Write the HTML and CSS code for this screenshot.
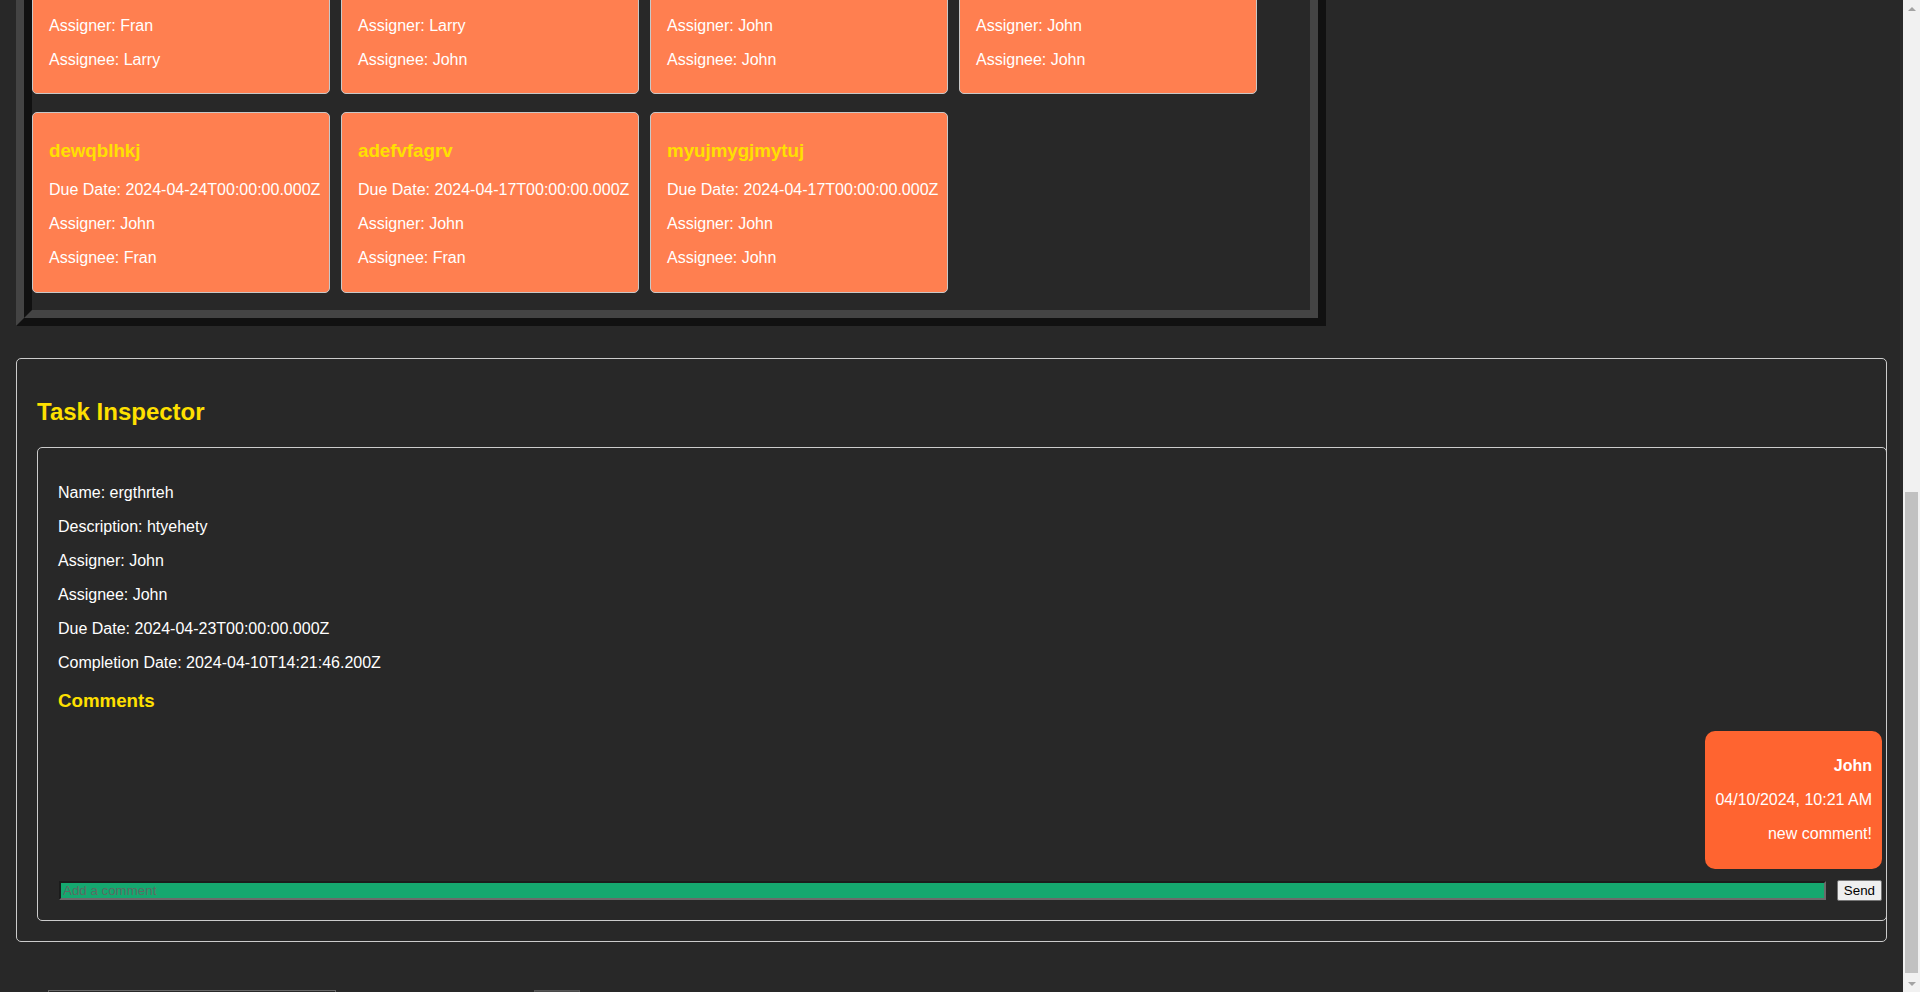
FILE: index.html
```html
<!DOCTYPE html>
<html lang="en">
<head>
<meta charset="utf-8">
<title>Task Board</title>
<link rel="stylesheet" href="styles.css">
</head>
<body>
<main class="app">
  <h1 class="page-title">Task Board</h1>

  <section class="board">
    <div class="board-inner">
      <div class="card"><h3 class="card-title">qwdqwdqw</h3><p>Due Date: 2024-04-12T00:00:00.000Z</p><p>Assigner: John</p><p>Assignee: Fran</p></div>
      <div class="card"><h3 class="card-title">fghjfgh</h3><p>Due Date: 2024-04-13T00:00:00.000Z</p><p>Assigner: Larry</p><p>Assignee: John</p></div>
      <div class="card"><h3 class="card-title">sdfsdfsdf</h3><p>Due Date: 2024-04-14T00:00:00.000Z</p><p>Assigner: Fran</p><p>Assignee: John</p></div>
      <div class="card"><h3 class="card-title">wertwert</h3><p>Due Date: 2024-04-15T00:00:00.000Z</p><p>Assigner: John</p><p>Assignee: Larry</p></div>

      <div class="card"><h3 class="card-title">tyuityui</h3><p>Due Date: 2024-04-16T00:00:00.000Z</p><p>Assigner: John</p><p>Assignee: John</p></div>
      <div class="card"><h3 class="card-title">zxcvzxcv</h3><p>Due Date: 2024-04-18T00:00:00.000Z</p><p>Assigner: Fran</p><p>Assignee: Fran</p></div>
      <div class="card"><h3 class="card-title">hjklhjkl</h3><p>Due Date: 2024-04-19T00:00:00.000Z</p><p>Assigner: Larry</p><p>Assignee: Fran</p></div>
      <div class="card"><h3 class="card-title">bnmbnm</h3><p>Due Date: 2024-04-20T00:00:00.000Z</p><p>Assigner: John</p><p>Assignee: Larry</p></div>

      <div class="card"><h3 class="card-title">poiupoiu</h3><p>Due Date: 2024-04-21T00:00:00.000Z</p><p>Assigner: Fran</p><p>Assignee: John</p></div>
      <div class="card"><h3 class="card-title">lkjhlkjh</h3><p>Due Date: 2024-04-22T00:00:00.000Z</p><p>Assigner: John</p><p>Assignee: Fran</p></div>
      <div class="card"><h3 class="card-title">mnbvmnbv</h3><p>Due Date: 2024-04-25T00:00:00.000Z</p><p>Assigner: Larry</p><p>Assignee: Larry</p></div>
      <div class="card"><h3 class="card-title">rewqrewq</h3><p>Due Date: 2024-04-26T00:00:00.000Z</p><p>Assigner: John</p><p>Assignee: John</p></div>

      <div class="card"><h3 class="card-title">gfdsgfds</h3><p>Due Date: 2024-04-27T00:00:00.000Z</p><p>Assigner: Fran</p><p>Assignee: Larry</p></div>
      <div class="card"><h3 class="card-title">vcxzvcxz</h3><p>Due Date: 2024-04-28T00:00:00.000Z</p><p>Assigner: Larry</p><p>Assignee: Fran</p></div>
      <div class="card"><h3 class="card-title">uytruytr</h3><p>Due Date: 2024-04-29T00:00:00.000Z</p><p>Assigner: John</p><p>Assignee: Fran</p></div>
      <div class="card"><h3 class="card-title">jhgfjhgf</h3><p>Due Date: 2024-04-30T00:00:00.000Z</p><p>Assigner: Fran</p><p>Assignee: John</p></div>

      <div class="card"><h3 class="card-title">thrthrth</h3><p>Due Date: 2024-04-19T00:00:00.000Z</p><p>Assigner: Fran</p><p>Assignee: Larry</p></div>
      <div class="card"><h3 class="card-title">yjtyjtyj</h3><p>Due Date: 2024-04-20T00:00:00.000Z</p><p>Assigner: Larry</p><p>Assignee: John</p></div>
      <div class="card"><h3 class="card-title">ergthrteh</h3><p>Due Date: 2024-04-23T00:00:00.000Z</p><p>Assigner: John</p><p>Assignee: John</p></div>
      <div class="card"><h3 class="card-title">kuykuyk</h3><p>Due Date: 2024-04-25T00:00:00.000Z</p><p>Assigner: John</p><p>Assignee: John</p></div>

      <div class="card"><h3 class="card-title">dewqblhkj</h3><p>Due Date: 2024-04-24T00:00:00.000Z</p><p>Assigner: John</p><p>Assignee: Fran</p></div>
      <div class="card"><h3 class="card-title">adefvfagrv</h3><p>Due Date: 2024-04-17T00:00:00.000Z</p><p>Assigner: John</p><p>Assignee: Fran</p></div>
      <div class="card"><h3 class="card-title">myujmygjmytuj</h3><p>Due Date: 2024-04-17T00:00:00.000Z</p><p>Assigner: John</p><p>Assignee: John</p></div>
    </div>
  </section>

  <section class="inspector">
    <h2 class="inspector-title">Task Inspector</h2>
    <div class="inspector-body">
      <p>Name: ergthrteh</p>
      <p>Description: htyehety</p>
      <p>Assigner: John</p>
      <p>Assignee: John</p>
      <p>Due Date: 2024-04-23T00:00:00.000Z</p>
      <p>Completion Date: 2024-04-10T14:21:46.200Z</p>
      <h3 class="comments-title">Comments</h3>
      <div class="comments">
        <div class="comment">
          <p><strong>John</strong></p>
          <p>04/10/2024, 10:21 AM</p>
          <p>new comment!</p>
        </div>
      </div>
      <form class="comment-form">
        <input class="comment-input" type="text" placeholder="Add a comment">
        <button class="send-btn" type="button">Send</button>
      </form>
    </div>
  </section>

  <form class="new-task">
    <input class="new-task-input" type="text" placeholder="Task name">
    <button class="new-task-btn" type="button">Add</button>
  </form>
</main>

<div class="scrollbar" aria-hidden="true">
  <div class="sb-btn"><span class="sb-arrow-up"></span></div>
  <div class="sb-track"><div class="sb-thumb"></div></div>
  <div class="sb-btn"><span class="sb-arrow-down"></span></div>
</div>

<script src="script.js"></script>
</body>
</html>
```

FILE: styles.css
```css
html {
  background: #282828;
}

body {
  margin: 8px 25px 8px 8px;
  background: #282828;
  color: #ffffff;
  font-family: "Liberation Sans", Arial, sans-serif;
  font-size: 16px;
}

.app {
  padding: 8px;
}

.page-title {
  margin: 21px 0;
  font-size: 32px;
  color: #ffe000;
}

/* board with a ridge-like double border */
.board {
  width: 1294px;
  border: 8px solid;
  border-color: #444444 #111111 #111111 #444444;
}

.board-inner {
  display: flex;
  flex-wrap: wrap;
  column-gap: 11px;
  row-gap: 18px;
  padding-bottom: 17px;
  border: 8px solid;
  border-color: #111111 #444444 #444444 #111111;
}

.card {
  width: 272px;
  padding: 8.6px 8px 8.6px 16px;
  background: #ff7f50;
  border: 1px solid #c8c8c8;
  border-radius: 5px;
  color: #ffffff;
}

.card-title {
  margin: 18.72px 0;
  font-size: 18.72px;
  color: #ffe000;
}

.card p {
  margin: 16px 0;
}

/* inspector */
.inspector {
  margin-top: 32px;
  padding: 18px 20px 20px;
  border: 1px solid #cccccc;
  border-radius: 5px;
  overflow: hidden;
}

.inspector-title {
  margin: 21px 0;
  font-size: 24px;
  color: #ffe000;
}

.inspector-body {
  margin-right: -21px;
  padding: 20px 4px 19px 20px;
  border: 1px solid #cccccc;
  border-radius: 5px;
}

.inspector-body p {
  margin: 16px 0;
}

.comments-title {
  margin: 18.72px 0;
  font-size: 18.72px;
  color: #ffe000;
}

.comment {
  width: fit-content;
  margin-left: auto;
  padding: 10px;
  background: #ff6430;
  border-radius: 10px;
  text-align: right;
  color: #ffffff;
}

.comment-form {
  display: flex;
  align-items: center;
  margin-top: 11px;
}

.comment-input {
  flex: 1;
  margin: 0 0 0 1px;
  padding: 0 2px;
  height: 15px;
  font-family: "Liberation Sans", Arial, sans-serif;
  font-size: 13.33px;
  background: #15a86f;
  border: 2px solid;
  border-color: #1c1c1c #6b6b6b #6b6b6b #1c1c1c;
  color: #000000;
}

.comment-input::placeholder {
  color: #5c6b63;
}

.send-btn {
  margin-left: 11px;
  height: 21px;
  padding: 0 6px;
  font-family: "Liberation Sans", Arial, sans-serif;
  font-size: 13.33px;
  color: #000000;
  background: #efefef;
  border: 1px solid #767676;
  border-radius: 2px;
}

/* form below the inspector */
.new-task {
  display: flex;
  margin-top: 48px;
  padding-left: 32px;
}

.new-task-input {
  box-sizing: border-box;
  width: 288px;
  height: 24px;
  background: #282828;
  border: 1px solid #666666;
  color: #ffffff;
}

.new-task-btn {
  margin-left: 198px;
  width: 46px;
  height: 24px;
  background: #4a4a4a;
  border: 1px solid #555555;
  color: #ffffff;
}

/* window scrollbar (drawn over the viewport edge) */
.scrollbar {
  position: fixed;
  top: 0;
  right: 0;
  width: 17px;
  height: 100vh;
  display: flex;
  flex-direction: column;
  background: #f1f1f1;
}

.sb-btn {
  height: 17px;
  display: flex;
  align-items: center;
  justify-content: center;
}

.sb-arrow-up {
  width: 0;
  height: 0;
  border-left: 4px solid transparent;
  border-right: 4px solid transparent;
  border-bottom: 4px solid #a3a3a3;
}

.sb-arrow-down {
  width: 0;
  height: 0;
  border-left: 4px solid transparent;
  border-right: 4px solid transparent;
  border-top: 4px solid #a3a3a3;
}

.sb-track {
  flex: 1;
  padding: 0 2px;
}

.sb-thumb {
  margin-top: 475px;
  height: 481px;
  background: #c1c1c1;
}
```

FILE: script.js
```js
function alignView() {
  var el = document.querySelector('.inspector');
  if (!el) return;
  var y = el.getBoundingClientRect().top + window.scrollY - 358;
  window.scrollTo(0, y);
}
if ('scrollRestoration' in history) { history.scrollRestoration = 'manual'; }
alignView();
window.addEventListener('load', alignView);
```
